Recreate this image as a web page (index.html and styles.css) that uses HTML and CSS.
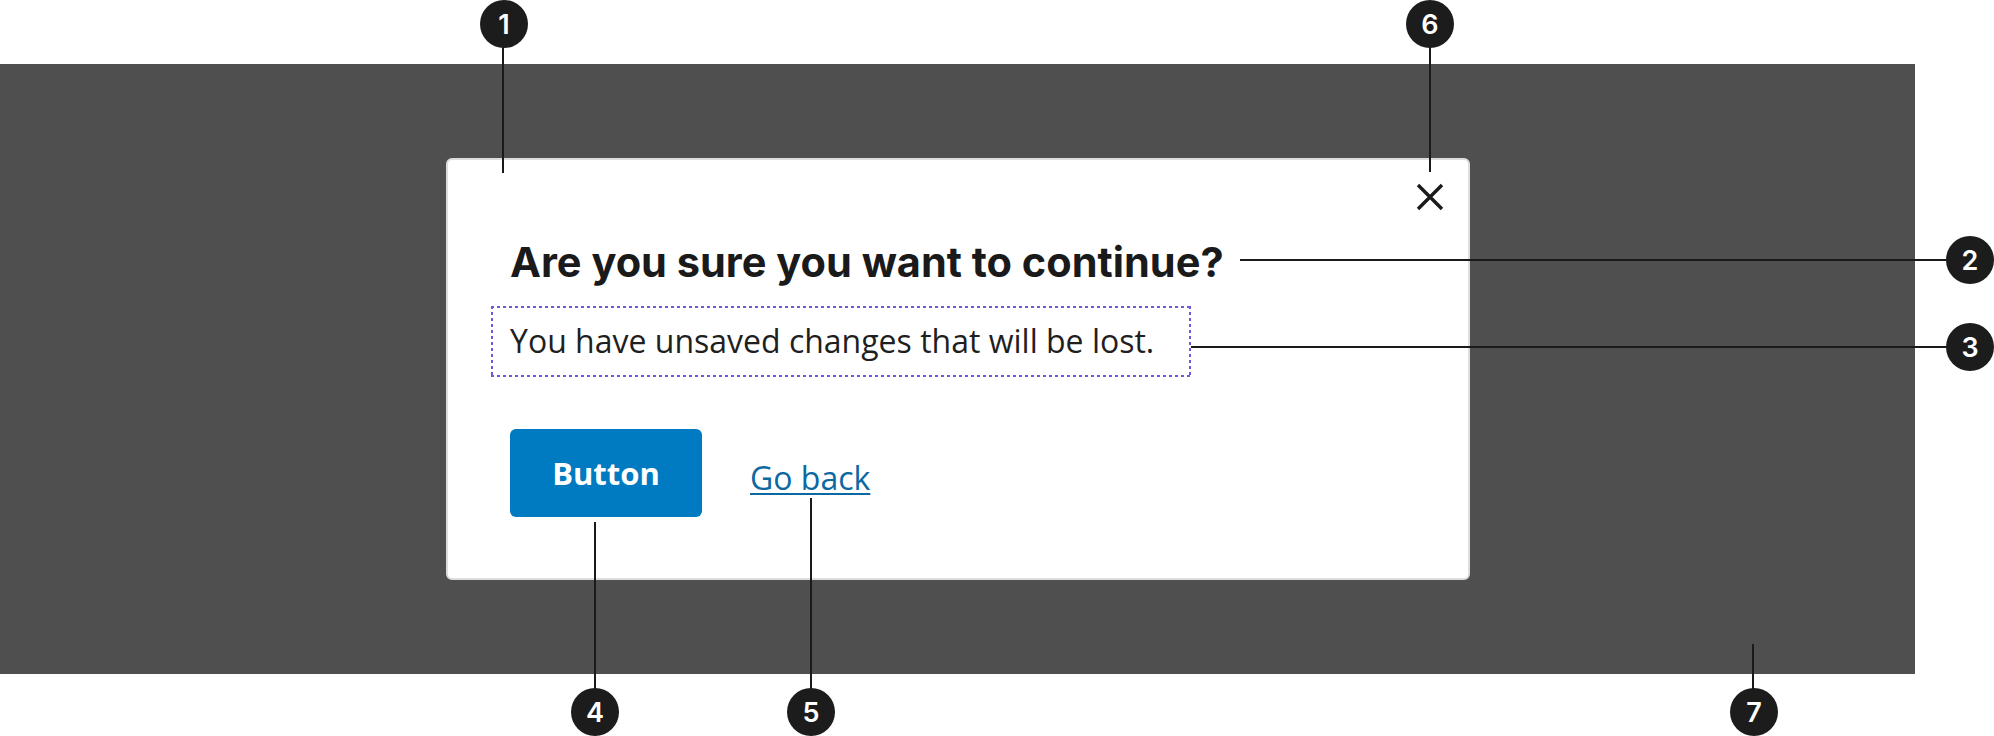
FILE: index.html
```html
<!DOCTYPE html>
<html lang="en">
<head>
<meta charset="utf-8">
<title>Modal anatomy</title>
<link rel="stylesheet" href="styles.css">
</head>
<body>
<div class="stage">
  <div class="backdrop">
    <div class="modal" role="dialog" aria-labelledby="modal-title">
      <div class="modal-top">
        <button class="close" aria-label="Close">
          <svg width="28" height="28" viewBox="0 0 28 28" aria-hidden="true"><path d="M2 2 L26 26 M26 2 L2 26" fill="none" stroke="#1a1a1a" stroke-width="3.4" stroke-linecap="butt"/></svg>
        </button>
      </div>
      <div class="modal-body">
        <h2 class="title" id="modal-title">Are you sure you want to continue?</h2>
        <div class="content-box">
          <p class="text">You have unsaved changes that will be lost.</p>
        </div>
        <div class="actions">
          <button class="primary">Button</button>
          <a class="link" href="#">Go back</a>
        </div>
      </div>
    </div>
  </div>

  <div class="line v l1"></div>
  <div class="line v l6"></div>
  <div class="line h l2"></div>
  <div class="line h l3"></div>
  <div class="line v l4"></div>
  <div class="line v l5"></div>
  <div class="line v l7"></div>

  <div class="badge b1">1</div>
  <div class="badge b6">6</div>
  <div class="badge b2">2</div>
  <div class="badge b3">3</div>
  <div class="badge b4">4</div>
  <div class="badge b5">5</div>
  <div class="badge b7">7</div>
</div>
</body>
</html>
```

FILE: styles.css
```css
* { box-sizing: border-box; }

html, body {
  margin: 0;
  padding: 0;
  background: #ffffff;
}

body {
  font-family: "Open Sans", "Liberation Sans", sans-serif;
  color: #1f1f1f;
}

.stage {
  position: relative;
  width: 1994px;
  height: 736px;
  padding-top: 64px;
  overflow: hidden;
}

.backdrop {
  width: 1915px;
  height: 610px;
  background: #4f4f4f;
  padding: 94px 0 0 446px;
}

.modal {
  width: 1024px;
  height: 422px;
  background: #ffffff;
  border: 2px solid #dddddd;
  border-radius: 6px;
  display: flex;
  flex-direction: column;
}

.modal-top {
  display: flex;
  justify-content: flex-end;
  padding: 23px 24px 0 0;
}

.close {
  width: 28px;
  height: 28px;
  padding: 0;
  margin: 0;
  border: 0;
  background: transparent;
  display: flex;
}

.modal-body {
  padding-left: 62px;
  display: flex;
  flex-direction: column;
  align-items: flex-start;
}

.title {
  margin: 27px 0 0 0;
  font-family: "Inter", "Liberation Sans", sans-serif;
  font-weight: 700;
  font-size: 41.5px;
  line-height: 48px;
  letter-spacing: 0;
  color: #1a1a1a;
}

.content-box {
  margin: 20px 0 0 -19px;
  width: 700px;
  height: 71px;
  padding: 13px 0 0 19px;
  background:
    repeating-linear-gradient(90deg, #7256e2 0 3px, transparent 3px 6px) left top / 100% 2px no-repeat,
    repeating-linear-gradient(90deg, #7256e2 0 3px, transparent 3px 6px) left bottom / 100% 2px no-repeat,
    repeating-linear-gradient(180deg, #7256e2 0 3px, transparent 3px 6px) left top / 2px 100% no-repeat,
    repeating-linear-gradient(180deg, #7256e2 0 3px, transparent 3px 6px) right top / 2px 100% no-repeat;
}

.text {
  margin: 0;
  font-size: 32px;
  line-height: 44px;
  color: #1f1f1f;
}

.actions {
  margin-top: 52px;
  display: flex;
  align-items: flex-start;
  gap: 48px;
}

.primary {
  width: 192px;
  height: 88px;
  border: 0;
  border-radius: 6px;
  background: #007ac0;
  color: #ffffff;
  font-family: "Open Sans", "Liberation Sans", sans-serif;
  font-weight: 700;
  font-size: 31px;
  padding: 0;
}

.link {
  margin-top: 27px;
  font-size: 32px;
  line-height: 44px;
  color: #0b68a3;
  text-decoration: underline;
  text-decoration-thickness: 2px;
  text-underline-offset: 3px;
}

/* annotation callouts */
.line {
  position: absolute;
  background: #1a1a1a;
}
.line.v { width: 2px; }
.line.h { height: 2px; }

.l1 { left: 502px; top: 40px; height: 133px; }
.l6 { left: 1429px; top: 40px; height: 132px; }
.l2 { left: 1240px; top: 259px; width: 710px; }
.l3 { left: 1191px; top: 346px; width: 760px; }
.l4 { left: 594px; top: 522px; height: 175px; }
.l5 { left: 810px; top: 498px; height: 199px; }
.l7 { left: 1752px; top: 644px; height: 50px; }

.badge {
  position: absolute;
  width: 48px;
  height: 48px;
  border-radius: 50%;
  background: #1c1c1c;
  color: #ffffff;
  font-family: "Inter", "Open Sans", sans-serif;
  font-weight: 600;
  font-size: 27px;
  line-height: 1;
  display: flex;
  align-items: center;
  justify-content: center;
}

.b1 { left: 480px; top: 0px; }
.b6 { left: 1406px; top: 0px; }
.b2 { left: 1946px; top: 236px; }
.b3 { left: 1946px; top: 323px; }
.b4 { left: 571px; top: 688px; }
.b5 { left: 787px; top: 688px; }
.b7 { left: 1730px; top: 688px; }
```
